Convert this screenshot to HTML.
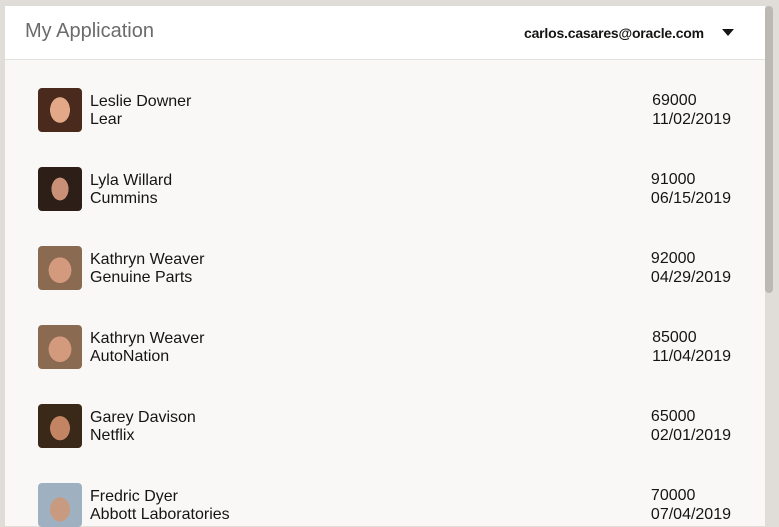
<!DOCTYPE html>
<html><head><style>
body{margin:0;width:779px;height:516px;overflow:hidden;background:#e0ddd8;font-family:"Liberation Sans",Arial,sans-serif;position:relative}
.panel{position:absolute;left:5px;top:6px;width:760px;height:520px;background:#f9f8f6}
.hdr{height:53px;background:#fff;border-bottom:1px solid #e3e1de;position:relative}
.title{position:absolute;left:20px;top:14px;font-size:20px;color:#6b6b6b}
.email{position:absolute;left:519px;top:19px;font-size:14px;font-weight:bold;color:#161513;letter-spacing:-0.2px}
.caret{position:absolute;left:717px;top:23px;width:0;height:0;border-left:6px solid transparent;border-right:6px solid transparent;border-top:7px solid #161513}
.row{position:absolute;left:38px;width:693px;height:44px}
.av{position:absolute;left:0;top:0;width:44px;height:44px;border-radius:4px;overflow:hidden}
.nm{position:absolute;left:52px;top:5px;font-size:16px;line-height:18px;color:#161513}
.num{position:absolute;right:0;top:3px;font-size:16px;line-height:19px;color:#161513;text-align:left}
.sb{position:absolute;left:765px;top:6px;width:8px;height:287px;background:#bcb8b3;border-radius:4px}
</style></head><body>
<div class="panel">
<div class="hdr"><div class="title">My Application</div><div class="email">carlos.casares@oracle.com</div><div class="caret"></div></div>
</div>
<div class="sb"></div>

<div class="row" style="top:88px"><div class="av" style="background:radial-gradient(ellipse 14px 18px at 50% 50%,#e2a888 70%,transparent 72%),#4a2a1c"></div><div class="nm">Leslie Downer<br>Lear</div><div class="num">69000<br>11/02/2019</div></div>
<div class="row" style="top:167px"><div class="av" style="background:radial-gradient(ellipse 12px 16px at 50% 50%,#c99077 70%,transparent 72%),#2e1e18"></div><div class="nm">Lyla Willard<br>Cummins</div><div class="num">91000<br>06/15/2019</div></div>
<div class="row" style="top:246px"><div class="av" style="background:radial-gradient(ellipse 16px 18px at 50% 55%,#d49a7e 70%,transparent 72%),#8a6a50"></div><div class="nm">Kathryn Weaver<br>Genuine Parts</div><div class="num">92000<br>04/29/2019</div></div>
<div class="row" style="top:325px"><div class="av" style="background:radial-gradient(ellipse 16px 18px at 50% 55%,#d49a7e 70%,transparent 72%),#8a6a50"></div><div class="nm">Kathryn Weaver<br>AutoNation</div><div class="num">85000<br>11/04/2019</div></div>
<div class="row" style="top:404px"><div class="av" style="background:radial-gradient(ellipse 14px 17px at 50% 55%,#c28462 70%,transparent 72%),#3a2818"></div><div class="nm">Garey Davison<br>Netflix</div><div class="num">65000<br>02/01/2019</div></div>
<div class="row" style="top:483px"><div class="av" style="background:radial-gradient(ellipse 14px 17px at 50% 60%,#c89a80 70%,transparent 72%),#9fb0c0"></div><div class="nm">Fredric Dyer<br>Abbott Laboratories</div><div class="num">70000<br>07/04/2019</div></div>
</body></html>
